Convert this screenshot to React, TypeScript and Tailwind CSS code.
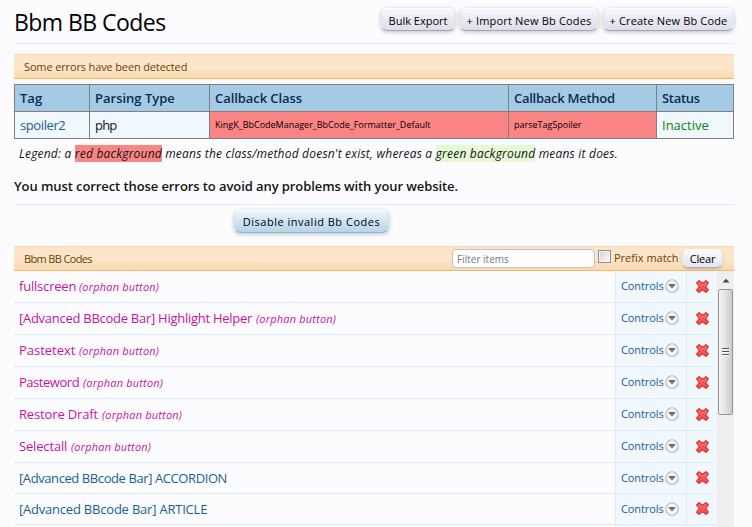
const font = "font-['Open_Sans','Noto_Sans',sans-serif]";

const headerButton =
  "h-[23px] shrink-0 whitespace-nowrap rounded-[6px] border border-t-white border-x-[#e6e6f1] border-b-[#a5a5b2] bg-linear-to-b from-[#f6f6fb] to-[#dedeeb] text-center text-[11px] leading-[24px] text-black shadow-[0_1px_4px_rgba(0,0,0,0.25)]";

type Item = { name: string; orphan: boolean; nameClass: string; rowClass: string };

const items: Item[] = [
  { name: "fullscreen", orphan: true, nameClass: "w-[56px] tracking-[-0.2px]", rowClass: "h-[32px]" },
  { name: "[Advanced BBcode Bar] Highlight Helper", orphan: true, nameClass: "w-[233px] tracking-[-0.27px]", rowClass: "h-[32px]" },
  { name: "Pastetext", orphan: true, nameClass: "w-[56px] tracking-[-0.02px]", rowClass: "h-[32px]" },
  { name: "Pasteword", orphan: true, nameClass: "w-[60px] tracking-[-0.46px]", rowClass: "h-[32px]" },
  { name: "Restore Draft", orphan: true, nameClass: "w-[79px] tracking-[-0.15px]", rowClass: "h-[32px]" },
  { name: "Selectall", orphan: true, nameClass: "w-[48px] tracking-[-0.16px]", rowClass: "h-[32px]" },
  { name: "[Advanced BBcode Bar] ACCORDION", orphan: false, nameClass: "w-[210px] tracking-[-0.41px]", rowClass: "h-[31px]" },
  { name: "[Advanced BBcode Bar] ARTICLE", orphan: false, nameClass: "w-[190px] tracking-[-0.21px]", rowClass: "h-[31px]" },
  { name: "", orphan: false, nameClass: "", rowClass: "h-[31px]" },
];

function ArrowCircle() {
  return (
    <svg width="14" height="14" viewBox="0 0 14 14" className="-ml-[0.5px] shrink-0">
      <circle cx="7" cy="7" r="6.2" fill="#f8fafc" stroke="#b0b4ba" strokeWidth="1.1" />
      <path d="M3 5h8L7 9.4z" fill="#6c6f73" />
    </svg>
  );
}

function DeleteCross() {
  return (
    <svg width="13" height="13" viewBox="0 0 13 13" className="shrink-0">
      <path
        d="M3 .6 6.5 3.2 10 .6 12.4 3 9.7 6.5 12.4 10 10 12.4 6.5 9.8 3 12.4.6 10 3.3 6.5.6 3z"
        fill="#ff5050"
        stroke="#d32f36"
        strokeWidth="1.1"
        strokeLinejoin="round"
      />
      <path d="M3 2.2 6.5 5 10 2.2M2.2 3.2 5 6.2M10.8 3.2 8.2 6.2" fill="none" stroke="#ff8580" strokeWidth=".8" />
    </svg>
  );
}

function Row({ item }: { item: Item }) {
  return (
    <div className={`flex shrink-0 border-b border-[#d7edfc] ${item.rowClass}`}>
      <div className="flex min-w-0 flex-1 items-center whitespace-nowrap pb-px pl-[5px]">
        <span className={`shrink-0 text-[13px] leading-[20px] ${item.orphan ? "text-[#c8139a]" : "text-[#176093]"} ${item.nameClass}`}>
          {item.name}
        </span>
        {item.orphan && (
          <span className="ml-[4px] pt-px text-[11px] italic leading-[20px] tracking-[0.18px] text-[#c8139a]">(orphan button)</span>
        )}
      </div>
      <div className="mb-px flex w-[71px] items-center border-l border-[#d7edfc] bg-[#f0f7fd] pl-[5px]">
        {item.name && (
          <>
            <span className="w-[44px] text-[11px] leading-[20px] tracking-[-0.1px] text-[#176093]">Controls</span>
            <ArrowCircle />
          </>
        )}
      </div>
      <div className="mb-px flex w-[31px] items-center justify-center border-l border-[#d7edfc] bg-[#f0f7fd]">
        {item.name && <DeleteCross />}
      </div>
    </div>
  );
}

function Scrollbar() {
  return (
    <div className="flex w-[17px] shrink-0 flex-col bg-[#eeeeef] pl-px">
      <div className="flex h-[18px] items-center justify-center">
        <svg width="8" height="5" viewBox="0 0 8 5">
          <path d="M.5 4.5 4 .8l3.5 3.7z" fill="#444" />
        </svg>
      </div>
      <div className="flex h-[126px] w-[15px] flex-col items-center justify-center gap-px rounded-[2px] border border-[#969699] bg-linear-to-r from-[#f6f6f6] via-[#e4e4e7] to-[#c9c9cf]">
        <div className="h-[2px] w-[7px] border-t border-[#555] bg-white" />
        <div className="h-[2px] w-[7px] border-t border-[#555] bg-white" />
        <div className="h-[2px] w-[7px] border-t border-[#555] bg-white" />
      </div>
    </div>
  );
}

export default function App() {
  return (
    <div className={`h-[527px] w-[752px] overflow-hidden bg-[#fcfcff] pl-[14px] pr-[18px] text-[#141414] ${font}`}>
      <header className="flex h-[44px] items-start border-b border-[#d7edfc]">
        <h1 className="mt-[6px] flex-1 whitespace-nowrap text-[23px] leading-[32px] tracking-[-0.55px] text-black">Bbm BB Codes</h1>
        <div className="mt-[8px] flex gap-[5px]">
          <button className={`${headerButton} w-[74px]`}>Bulk Export</button>
          <button className={`${headerButton} w-[138px] tracking-[0.18px]`}>+ Import New Bb Codes</button>
          <button className={`${headerButton} w-[131px] tracking-[0.15px]`}>+ Create New Bb Code</button>
        </div>
      </header>

      <div className="mt-[10px] h-[25px] border-t border-b border-t-[#f9d9b0] border-b-[#f9b857] bg-linear-to-b from-[#fce5c8] from-60% to-[#f9d8ad] pl-[10px] text-[11px] leading-[23px] tracking-[-0.14px] text-[#6d3f03]">
        Some errors have been detected
      </div>

      <table className="mt-[5px] w-[719px] table-fixed border-collapse text-left">
        <colgroup>
          <col className="w-[75px]" />
          <col className="w-[120px]" />
          <col className="w-[299px]" />
          <col className="w-[148px]" />
          <col className="w-[77px]" />
        </colgroup>
        <thead>
          <tr className="h-[27px] bg-[#a5cae4] text-[13px] leading-[20px] text-[#0b2c50] *:whitespace-nowrap *:border *:border-[#808080] *:p-0 *:pl-[5px] *:font-semibold">
            <th>Tag</th>
            <th>Parsing Type</th>
            <th className="tracking-[-0.07px]">Callback Class</th>
            <th className="tracking-[-0.27px]">Callback Method</th>
            <th className="tracking-[-0.3px]">Status</th>
          </tr>
        </thead>
        <tbody>
          <tr className="h-[27px] bg-[#f0f7fd] text-[13px] leading-[20px] *:whitespace-nowrap *:border *:border-[#808080] *:p-0 *:pl-[5px]">
            <td className="tracking-[-0.4px] text-[#176093]">spoiler2</td>
            <td className="tracking-[-0.8px]">php</td>
            <td className="bg-[#fb8585] text-[9px] text-black">KingK_BbCodeManager_BbCode_Formatter_Default</td>
            <td className="bg-[#fb8585] text-[9px] text-black">parseTagSpoiler</td>
            <td className="text-[#078207]">Inactive</td>
          </tr>
        </tbody>
      </table>

      <p className="mt-[5px] h-[20px] whitespace-nowrap pl-[5px] text-[12px] italic leading-[20px] tracking-[0.2px]">
        Legend: a <span className="bg-[#fb8585]">red background</span> means the class/method doesn't exist, whereas a{" "}
        <span className="bg-[#e4fad4]">green background</span> means it does.
      </p>
      <p className="mt-[12px] h-[29px] whitespace-nowrap border-b border-[#d7edfc] text-[13px] font-semibold leading-[20px] tracking-[-0.085px]">
        You must correct those errors to avoid any problems with your website.
      </p>

      <div className="flex h-[41px] items-start pl-[220px] pt-[5px]">
        <button className="h-[23px] w-[155px] whitespace-nowrap rounded-[6px] border border-t-white border-x-[#d3e5f0] border-b-[#94b8cd] bg-linear-to-b from-[#eaf4fa] to-[#b5d4e8] pb-px text-[11px] leading-[19px] tracking-[0.5px] text-black shadow-[0_1px_4px_rgba(0,0,0,0.25)]">
          Disable invalid Bb Codes
        </button>
      </div>

      <div className="flex h-[25px] items-center border-t border-b border-t-[#f9d9b0] border-b-[#f9b871] bg-linear-to-b from-[#fce5c8] from-50% to-[#f9d8ad] pl-[10px] text-[11px] text-[#6d3f03]">
        <span className="flex-1 pt-px tracking-[-0.65px]">Bbm BB Codes</span>
        <input
          className="h-[19px] w-[143px] rounded-[4px] border border-[#c0c0c8] bg-white px-[4px] text-[10px] placeholder:text-[#777]"
          placeholder="Filter items"
        />
        <span className="mb-[5px] ml-[3px] h-[13px] w-[13px] border border-[#8e8f8f] bg-linear-to-br from-[#cbcfd5] to-white shadow-[inset_0_0_0_1px_#f4f4f4]" />
        <span className="ml-[3px] w-[65px] whitespace-nowrap">Prefix match</span>
        <button className="ml-[3px] mr-[11px] h-[19px] w-[41px] rounded-[6px] border border-t-white border-x-[#e6e6f1] border-b-[#b5b5c2] bg-linear-to-b from-[#fafafe] to-[#e4e4ef] text-[11px] leading-[17px] tracking-[-0.2px] text-black shadow-[0_1px_2px_rgba(0,0,0,0.2)]">
          Clear
        </button>
      </div>

      <div className="flex h-[256px] overflow-hidden">
        <div className="flex w-[703px] shrink-0 flex-col">
          {items.map((item, i) => (
            <Row key={i} item={item} />
          ))}
        </div>
        <Scrollbar />
      </div>
    </div>
  );
}
